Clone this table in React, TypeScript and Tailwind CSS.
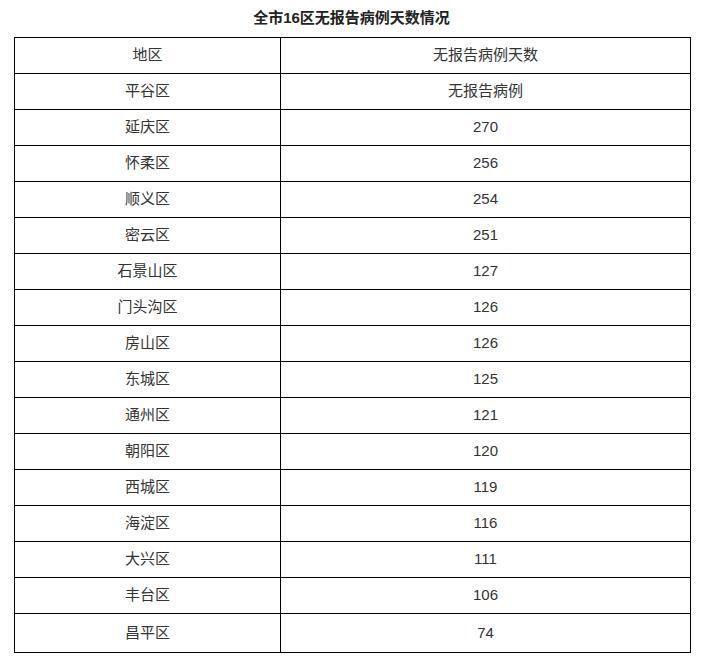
import React from 'react'

const ROWS: [string, string][] = [
  ['平谷区', '无报告病例'],
  ['延庆区', '270'],
  ['怀柔区', '256'],
  ['顺义区', '254'],
  ['密云区', '251'],
  ['石景山区', '127'],
  ['门头沟区', '126'],
  ['房山区', '126'],
  ['东城区', '125'],
  ['通州区', '121'],
  ['朝阳区', '120'],
  ['西城区', '119'],
  ['海淀区', '116'],
  ['大兴区', '111'],
  ['丰台区', '106'],
  ['昌平区', '74'],
]

export default function App() {
  return (
    <div
      className="min-h-screen bg-white text-[#333] pt-[6px]"
      style={{ fontFamily: '"Liberation Sans", "Noto Sans CJK SC", sans-serif' }}
    >
      <h1 className="text-center text-[15px] font-bold leading-[24px] h-[31px] text-[#222]">
        全市16区无报告病例天数情况
      </h1>
      <table className="ml-[14px] w-[677px] border-collapse text-[15px]">
        <tbody>
          <tr className="h-[36px]">
            <td className="w-[266px] border border-black text-center">地区</td>
            <td className="border border-black text-center">无报告病例天数</td>
          </tr>
          {ROWS.map(([name, days], i) => (
            <tr key={name} className={i === ROWS.length - 1 ? 'h-[39px]' : 'h-[36px]'}>
              <td className="border border-black text-center">{name}</td>
              <td className="border border-black text-center">{days}</td>
            </tr>
          ))}
        </tbody>
      </table>
    </div>
  )
}
